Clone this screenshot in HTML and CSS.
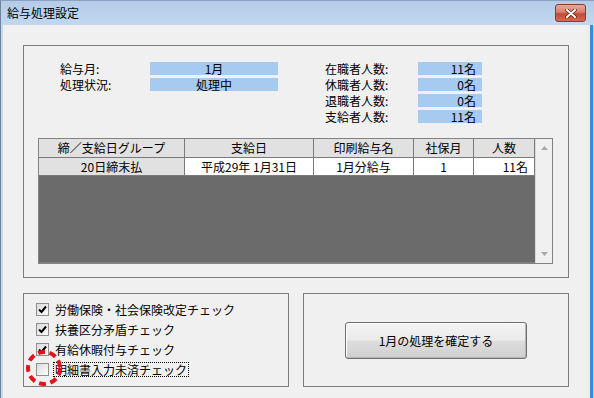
FILE: index.html
```html
<!DOCTYPE html>
<html lang="ja">
<head>
    <meta charset="UTF-8">
    <meta name="viewport" content="width=device-width, initial-scale=1.0">
    <title>給与処理設定</title>
    <link rel="stylesheet" href="styles.css">
</head>
<body>
    <div class="window">
        <div class="titlebar">
            <span class="title">給与処理設定</span>
            <button class="close-btn" aria-label="閉じる">
                <svg width="12" height="9" viewBox="0 0 12 9">
                    <path d="M2 1 L10 8 M10 1 L2 8" stroke="#5a1a14" stroke-width="3.4" stroke-linecap="round"/>
                    <path d="M2 1 L10 8 M10 1 L2 8" stroke="#ffffff" stroke-width="2" stroke-linecap="round"/>
                </svg>
            </button>
        </div>

        <div class="frame">
            <div class="frame-left"></div>

            <div class="client">
                <div class="group top-group">
                    <div class="info">
                        <div class="info-block">
                            <div class="info-row">
                                <span class="label label-left">給与月:</span>
                                <span class="value value-left">1月</span>
                            </div>
                            <div class="info-row">
                                <span class="label label-left">処理状況:</span>
                                <span class="value value-left">処理中</span>
                            </div>
                        </div>
                        <div class="info-block">
                            <div class="info-row">
                                <span class="label label-right">在職者人数:</span>
                                <span class="value value-right">11名</span>
                            </div>
                            <div class="info-row">
                                <span class="label label-right">休職者人数:</span>
                                <span class="value value-right">0名</span>
                            </div>
                            <div class="info-row">
                                <span class="label label-right">退職者人数:</span>
                                <span class="value value-right">0名</span>
                            </div>
                            <div class="info-row">
                                <span class="label label-right">支給者人数:</span>
                                <span class="value value-right">11名</span>
                            </div>
                        </div>
                    </div>

                    <div class="grid">
                        <div class="grid-body">
                            <div class="grid-row">
                                <div class="cell head">締／支給日グループ</div>
                                <div class="cell head">支給日</div>
                                <div class="cell head">印刷給与名</div>
                                <div class="cell head">社保月</div>
                                <div class="cell head">人数</div>
                            </div>
                            <div class="grid-row data">
                                <div class="cell row-head">20日締末払</div>
                                <div class="cell">平成29年 1月31日</div>
                                <div class="cell">1月分給与</div>
                                <div class="cell">1</div>
                                <div class="cell num">11名</div>
                            </div>
                            <div class="grid-empty"></div>
                        </div>
                        <div class="scrollbar">
                            <svg width="7" height="4" viewBox="0 0 7 4"><path d="M0 4 L3.5 0 L7 4 Z" fill="#a8a8a8"/></svg>
                            <svg width="7" height="4" viewBox="0 0 7 4"><path d="M0 0 L3.5 4 L7 0 Z" fill="#a8a8a8"/></svg>
                        </div>
                    </div>
                </div>

                <div class="bottom">
                    <div class="group check-group">
                        <label class="check-row">
                            <span class="checkbox checked">
                                <svg width="9" height="9" viewBox="0 0 9 9"><path d="M1 4.5 L3.5 7 L8 1.5" fill="none" stroke="#000" stroke-width="2"/></svg>
                            </span>
                            <span class="check-text">労働保険・社会保険改定チェック</span>
                        </label>
                        <label class="check-row">
                            <span class="checkbox checked">
                                <svg width="9" height="9" viewBox="0 0 9 9"><path d="M1 4.5 L3.5 7 L8 1.5" fill="none" stroke="#000" stroke-width="2"/></svg>
                            </span>
                            <span class="check-text">扶養区分矛盾チェック</span>
                        </label>
                        <label class="check-row">
                            <span class="checkbox checked">
                                <svg width="9" height="9" viewBox="0 0 9 9"><path d="M1 4.5 L3.5 7 L8 1.5" fill="none" stroke="#000" stroke-width="2"/></svg>
                            </span>
                            <span class="check-text">有給休暇付与チェック</span>
                        </label>
                        <label class="check-row">
                            <span class="checkbox"></span>
                            <span class="check-text focused">明細書入力未済チェック</span>
                        </label>
                    </div>

                    <div class="group action-group">
                        <button class="confirm-btn">1月の処理を確定する</button>
                    </div>
                </div>
            </div>

            <div class="frame-right"></div>
        </div>

        <!-- red annotation circle -->
        <svg class="mark" width="36" height="36" viewBox="0 0 36 36">
            <circle cx="18" cy="18" r="16" fill="none" stroke="#e5121b" stroke-width="4" stroke-dasharray="7 4.5"/>
        </svg>
    </div>
</body>
</html>
```

FILE: styles.css
```css
:root {
    --face: #f0f0f0;
    --line: #7c7c7c;
    --value-bg: #a6caf0;
    --frame: #c4d8ee;
}
body {
    margin: 0;
    padding: 0;
    background: #ffffff;
    font-family: "Noto Sans CJK JP", "Noto Sans CJK SC", sans-serif;
    font-size: 12px;
    color: #000;
}
.window {
    position: relative;
    width: 594px;
    height: 398px;
    display: flex;
    flex-direction: column;
    overflow: hidden;
    background: var(--frame);
}
.titlebar {
    height: 25px;
    display: flex;
    align-items: flex-start;
    justify-content: space-between;
    background: linear-gradient(#b4cce7, #bcd3ec 60%, #c3d8ee);
    border-top: 1px solid #8aa2bf;
    box-sizing: border-box;
    border-left: 1px solid #6f839c;
}
.title {
    margin: 4px 0 0 6px;
    line-height: 16px;
    font-size: 12px;
}
.close-btn {
    margin: 3px 8px 0 0;
    width: 31px;
    height: 18px;
    padding: 0;
    border: 1px solid #8c3d33;
    border-radius: 3px;
    background: linear-gradient(#e8a89c, #d7806f 45%, #c24a38 55%, #cf6a55);
    display: flex;
    align-items: center;
    justify-content: center;
}
.frame {
    flex: 1;
    display: flex;
}
.frame-left {
    width: 2px;
    border-left: 1px solid #6f839c;
    background: var(--frame);
}
.client {
    flex: 1;
    background: var(--face);
    padding: 20px 18px 0 20px;
    border-left: 0;
}
.frame-right {
    width: 7px;
    box-sizing: border-box;
    background: linear-gradient(90deg, #e6eef7 0, #e6eef7 3px, #3f8ad8 3px, #3f8ad8 6px, #b7cde6 6px);
}
.group {
    border: 1px solid var(--line);
    box-sizing: border-box;
}
.top-group {
    height: 233px;
    padding: 16px 0 0 14px;
}
.info {
    display: flex;
    gap: 47px;
    padding-left: 22px;
}
.info-row {
    display: flex;
    height: 13px;
    margin-bottom: 3px;
    line-height: 13px;
}
.label-left {
    width: 90px;
}
.label-right {
    width: 93px;
}
.value {
    background: var(--value-bg);
    box-sizing: border-box;
}
.value-left {
    width: 128px;
    text-align: center;
}
.value-right {
    width: 64px;
    text-align: right;
    padding-right: 6px;
}
.grid {
    margin-top: 12px;
    width: 515px;
    height: 126px;
    border: 1px solid #828282;
    box-sizing: border-box;
    display: flex;
}
.grid-body {
    width: 496px;
    display: flex;
    flex-direction: column;
    background: #6b6b6b;
}
.grid-row {
    display: grid;
    grid-template-columns: 146px 129px 100px 60px 61px;
    height: 19px;
}
.grid-row.data {
    height: 18px;
}
.cell {
    box-sizing: border-box;
    border-right: 1px solid #7a7a7a;
    border-bottom: 1px solid #7a7a7a;
    background: #ffffff;
    text-align: center;
    line-height: 17px;
    white-space: nowrap;
    overflow: hidden;
}
.cell.head,
.cell.row-head {
    background: #e1e1e1;
}
.cell.num {
    text-align: right;
    padding-right: 6px;
}
.grid-empty {
    flex: 1;
    border-bottom: 1px solid #7e7e7e;
}
.scrollbar {
    width: 17px;
    background: #f0f0f0;
    border-left: 1px solid #dadada;
    display: flex;
    flex-direction: column;
    align-items: center;
    justify-content: space-between;
    padding: 7px 0 7px;
}
.bottom {
    display: flex;
    gap: 14px;
    margin-top: 15px;
}
.check-group {
    width: 266px;
    height: 94px;
    padding: 5px 0 0 12px;
}
.check-row {
    display: flex;
    align-items: center;
    height: 20px;
}
.checkbox {
    width: 13px;
    height: 13px;
    box-sizing: border-box;
    border: 1px solid #8e8f8f;
    background: linear-gradient(135deg, #dcdcdc, #fbfbfb);
    display: flex;
    align-items: center;
    justify-content: center;
    margin-right: 4px;
}
.check-text {
    padding: 0 1px;
    line-height: 13px;
    border: 1px solid transparent;
}
.check-text.focused {
    border: 1px dotted #000;
}
.action-group {
    width: 266px;
    height: 94px;
    display: flex;
    align-items: center;
    justify-content: center;
}
.confirm-btn {
    width: 182px;
    height: 37px;
    font-family: inherit;
    font-size: 12px;
    color: #000;
    border: 1px solid #707070;
    border-radius: 3px;
    background: linear-gradient(#f4f4f4, #ebebeb 48%, #dddddd 52%, #cfcfcf);
    box-shadow: inset -1px -1px 0 #b5b5b5, inset 1px 1px 0 #fcfcfc;
    padding: 0;
}
.mark {
    position: absolute;
    left: 26px;
    top: 350px;
}
```
